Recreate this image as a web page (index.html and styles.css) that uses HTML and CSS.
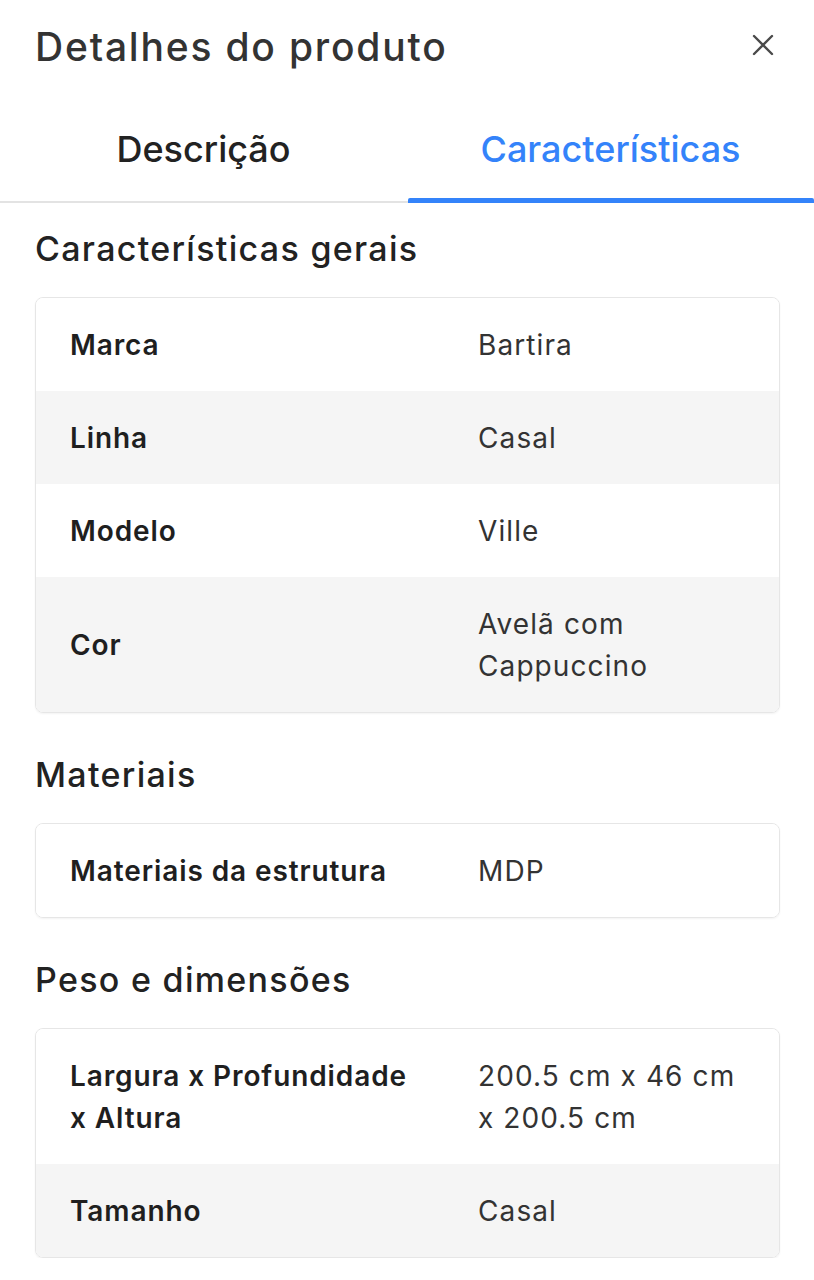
FILE: index.html
```html
<!DOCTYPE html>
<html lang="pt">
<head>
<meta charset="utf-8">
<link rel="stylesheet" href="styles.css">
</head>
<body>
<div class="page">
  <header class="header">
    <h1 class="title">Detalhes do produto</h1>
    <button class="close" aria-label="Fechar">
      <svg width="22" height="22" viewBox="0 0 22 22"><path d="M2 2L20 20M20 2L2 20" stroke="#4a4a4a" stroke-width="2.4" stroke-linecap="round"/></svg>
    </button>
  </header>
  <nav class="tabs">
    <div class="tab">Descrição</div>
    <div class="tab active">Características</div>
  </nav>
  <main class="content">
    <section class="section first">
      <h2 class="heading">Características gerais</h2>
      <div class="card">
        <div class="row"><div class="label">Marca</div><div class="value">Bartira</div></div>
        <div class="row alt"><div class="label">Linha</div><div class="value">Casal</div></div>
        <div class="row"><div class="label">Modelo</div><div class="value">Ville</div></div>
        <div class="row alt"><div class="label">Cor</div><div class="value">Avelã com Cappuccino</div></div>
      </div>
    </section>
    <section class="section">
      <h2 class="heading">Materiais</h2>
      <div class="card">
        <div class="row"><div class="label">Materiais da estrutura</div><div class="value">MDP</div></div>
      </div>
    </section>
    <section class="section">
      <h2 class="heading">Peso e dimensões</h2>
      <div class="card">
        <div class="row"><div class="label">Largura x Profundidade x Altura</div><div class="value">200.5 cm x 46 cm x 200.5 cm</div></div>
        <div class="row alt"><div class="label">Tamanho</div><div class="value">Casal</div></div>
      </div>
    </section>
  </main>
</div>
</body>
</html>
```
FILE: styles.css
```css
* { box-sizing: border-box; }
html, body { margin: 0; padding: 0; background: #fff; }
body { font-family: "Inter", "Liberation Sans", sans-serif; color: #222; }
.page { width: 814px; }
.header {
  display: flex; align-items: center; justify-content: space-between;
  height: 94px; padding: 0 40px 0 35px;
}
.title { margin: 0; font-size: 39px; font-weight: 500; color: #333; letter-spacing: 1.8px; line-height: 48px; }
.close { border: 0; background: none; padding: 0; display: flex; margin-top: -4px; }
.tabs {
  display: flex; height: 109px; border-bottom: 2px solid #e3e3e3;
}
.tab {
  flex: 1; display: flex; align-items: center; justify-content: center;
  font-size: 36px; font-weight: 500; color: #222; position: relative; padding-top: 2px;
}
.tab.active { color: #3483fa; }
.tab.active::after {
  content: ""; position: absolute; left: 1px; right: 0; bottom: -2px; height: 5px;
  background: #3483fa; border-radius: 2px 2px 0 0;
}
.content { padding: 0 34px 0 35px; }
.section { margin-top: 42px; }
.section.first { margin-top: 26px; }
.heading { margin: 0 0 28px 0; font-size: 34px; font-weight: 500; line-height: 40px; color: #222; letter-spacing: 1.3px; }
.card {
  border: 1.5px solid #e6e6e6; border-radius: 8px; overflow: hidden;
  box-shadow: 0 1px 2px rgba(0,0,0,0.05);
}
.row {
  display: grid; grid-template-columns: 356px 1fr; column-gap: 52px;
  padding: 25.5px 34px; align-items: center; background: #fff;
  font-size: 28px; line-height: 42px;
}
.row.alt { background: #f5f5f5; }
.label { font-weight: 600; color: #1f1f1f; letter-spacing: 0.9px; }
.value { font-weight: 400; color: #333; letter-spacing: 1.1px; }
```
